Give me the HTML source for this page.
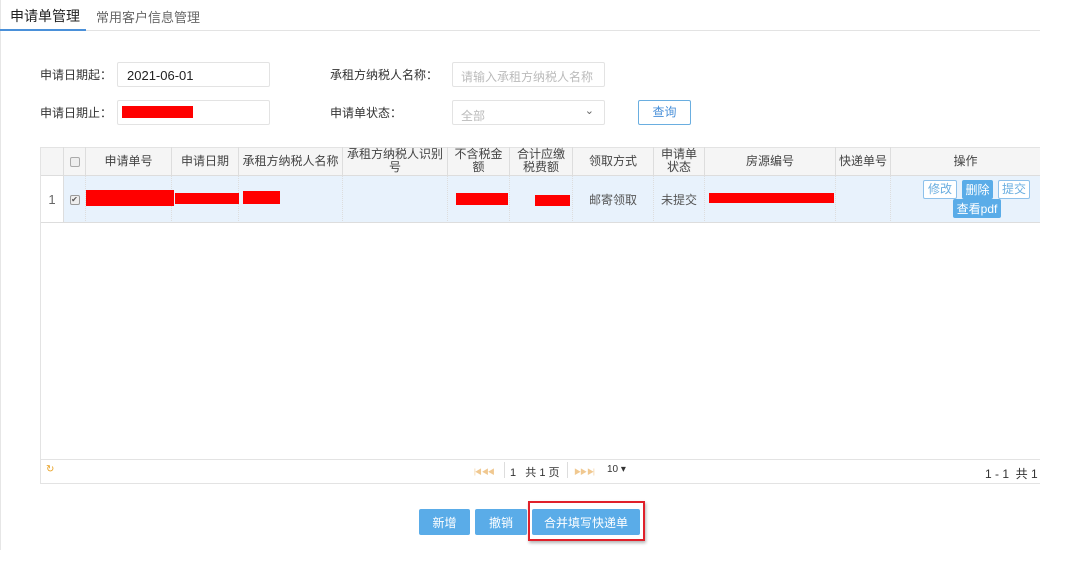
<!DOCTYPE html>
<html><head><meta charset="utf-8">
<style>
*{box-sizing:border-box;margin:0;padding:0}
body{width:1080px;height:569px;background:#fff;font-family:"Liberation Sans","Noto Sans CJK SC",sans-serif;font-size:12px;color:#333;position:relative;overflow:hidden}
.a{position:absolute}
.lbl{font-size:12px;color:#333}
.inp{border:1px solid #e3e3e3;background:#fff;border-radius:2px}
.red{background:#f00;position:absolute}
.th{position:absolute;top:147px;height:29px;border-right:1px solid #ddd;text-align:center;font-size:12px;color:#444;display:flex;align-items:center;justify-content:center;line-height:13px}
.td{position:absolute;top:176px;height:47px;border-right:1px dotted #ddd;text-align:center;display:flex;align-items:center;justify-content:center;color:#555}
.btn{position:absolute;background:#5aace8;color:#fff;font-size:12px;display:flex;align-items:center;justify-content:center;border-radius:2px}
.pg{position:absolute;top:467px;color:#f0c890;font-size:7px;letter-spacing:-1px}
</style></head><body>
<div class="a" style="left:0;top:0;width:1px;height:550px;background:#e6e6e6"></div>
<div class="a" style="left:0;top:30px;width:1040px;height:1px;background:#e3e3e3"></div>
<div class="a" style="left:0;top:29px;width:86px;height:2px;background:#4a90d9"></div>
<div class="a" style="left:10px;top:6px;font-size:14px;color:#222">申请单管理</div>
<div class="a" style="left:96px;top:7px;font-size:13px;color:#666">常用客户信息管理</div>

<div class="a lbl" style="left:40px;top:66px">申请日期起：</div>
<div class="a inp" style="left:117px;top:62px;width:153px;height:25px;padding:5px 9px;font-size:13px;color:#222">2021-06-01</div>
<div class="a lbl" style="left:40px;top:104px">申请日期止：</div>
<div class="a inp" style="left:117px;top:100px;width:153px;height:25px"></div>
<div class="red" style="left:122px;top:106px;width:71px;height:12px"></div>
<div class="a lbl" style="left:330px;top:66px">承租方纳税人名称：</div>
<div class="a inp" style="left:452px;top:62px;width:153px;height:25px;padding:5px 8px;color:#bbb">请输入承租方纳税人名称</div>
<div class="a lbl" style="left:330px;top:104px">申请单状态：</div>
<div class="a inp" style="left:452px;top:100px;width:153px;height:25px;padding:6px 8px;color:#bbb">全部<span style="position:absolute;right:10px;top:3px;color:#666;font-size:11px">&#8964;</span></div>
<div class="a" style="left:638px;top:100px;width:53px;height:25px;border:1px solid #6aaee0;border-radius:2px;color:#4a90d9;text-align:center;line-height:23px">查询</div>

<div class="a" style="left:40px;top:147px;width:1000px;height:337px;border:1px solid #e3e3e3;border-right:none"></div>
<div class="a" style="left:41px;top:148px;width:999px;height:28px;background:#f5f5f5;border-bottom:1px solid #ddd"></div>
<div class="th" style="left:40px;width:24px"></div>
<div class="th" style="left:64px;width:22px"><span style="width:10px;height:10px;border:1px solid #aaa;border-radius:2px;background:#eee"></span></div>
<div class="th" style="left:86px;width:86px">申请单号</div>
<div class="th" style="left:172px;width:67px">申请日期</div>
<div class="th" style="left:239px;width:104px">承租方纳税人名称</div>
<div class="th" style="left:343px;width:105px;align-items:flex-start;padding-top:1px">承租方纳税人识别<br>号</div>
<div class="th" style="left:448px;width:62px;align-items:flex-start;padding-top:1px">不含税金<br>额</div>
<div class="th" style="left:510px;width:63px;align-items:flex-start;padding-top:1px">合计应缴<br>税费额</div>
<div class="th" style="left:573px;width:81px">领取方式</div>
<div class="th" style="left:654px;width:51px;align-items:flex-start;padding-top:1px">申请单<br>状态</div>
<div class="th" style="left:705px;width:131px">房源编号</div>
<div class="th" style="left:836px;width:55px">快递单号</div>
<div class="th" style="left:891px;width:149px;border-right:none">操作</div>

<div class="a" style="left:64px;top:176px;width:976px;height:47px;background:#e8f2fc;border-bottom:1px solid #ddd"></div>
<div class="a" style="left:41px;top:176px;width:23px;height:47px;border-right:1px solid #ddd;border-bottom:1px solid #ddd;text-align:center;line-height:47px;color:#666;font-size:13px">1</div>
<div class="td" style="left:64px;width:22px"><span style="width:10px;height:10px;border:1px solid #999;border-radius:2px;background:#eee;font-size:8px;line-height:8px">✔</span></div>
<div class="td" style="left:86px;width:86px"></div>
<div class="td" style="left:172px;width:67px"></div>
<div class="td" style="left:239px;width:104px"></div>
<div class="td" style="left:343px;width:105px"></div>
<div class="td" style="left:448px;width:62px"></div>
<div class="td" style="left:510px;width:63px"></div>
<div class="td" style="left:573px;width:81px">邮寄领取</div>
<div class="td" style="left:654px;width:51px">未提交</div>
<div class="td" style="left:705px;width:131px"></div>
<div class="td" style="left:836px;width:55px"></div>
<div class="red" style="left:86px;top:190px;width:88px;height:16px"></div>
<div class="red" style="left:175px;top:193px;width:64px;height:11px"></div>
<div class="red" style="left:243px;top:191px;width:37px;height:13px"></div>
<div class="red" style="left:456px;top:193px;width:52px;height:12px"></div>
<div class="red" style="left:535px;top:195px;width:35px;height:11px"></div>
<div class="red" style="left:709px;top:193px;width:125px;height:10px"></div>
<div class="a" style="left:923px;top:180px;width:34px;height:19px;border:1px solid #8ec1eb;background:#fff;color:#6aaee0;text-align:center;line-height:17px;border-radius:2px">修改</div>
<div class="btn" style="left:962px;top:180px;width:31px;height:19px">删除</div>
<div class="a" style="left:998px;top:180px;width:32px;height:19px;border:1px solid #8ec1eb;background:#fff;color:#6aaee0;text-align:center;line-height:17px;border-radius:2px">提交</div>
<div class="btn" style="left:953px;top:199px;width:48px;height:19px">查看pdf</div>

<div class="a" style="left:41px;top:459px;width:999px;height:1px;background:#e3e3e3"></div>
<div class="a" style="left:46px;top:464px;color:#e8a020;font-size:10px">↻</div>
<div class="pg" style="left:474px">|◀ ◀◀</div>
<div class="a" style="left:504px;top:462px;width:1px;height:16px;background:#ddd"></div>
<div class="a" style="left:510px;top:464px;font-size:11px;color:#333">1 &nbsp; 共 1 页</div>
<div class="a" style="left:567px;top:462px;width:1px;height:16px;background:#ddd"></div>
<div class="pg" style="left:574px">▶▶ ▶|</div>
<div class="a" style="left:607px;top:464px;font-size:10px;color:#333">10 ▾</div>
<div class="a" style="left:985px;top:465px;font-size:12px;color:#333">1 - 1 &nbsp;共 1</div>

<div class="btn" style="left:419px;top:509px;width:51px;height:26px">新增</div>
<div class="btn" style="left:475px;top:509px;width:52px;height:26px">撤销</div>
<div class="btn" style="left:532px;top:509px;width:108px;height:26px">合并填写快递单</div>
<div class="a" style="left:528px;top:501px;width:117px;height:40px;border:2px solid #e0202a;box-shadow:1px 2px 3px rgba(0,0,0,.3)"></div>
</body></html>
